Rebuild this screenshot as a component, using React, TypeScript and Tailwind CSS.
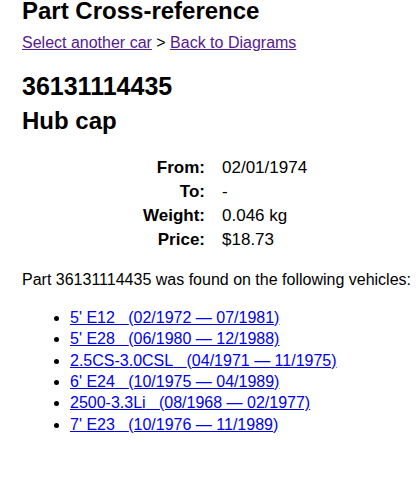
const specs = [
  { label: 'From:', value: '02/01/1974' },
  { label: 'To:', value: '-' },
  { label: 'Weight:', value: '0.046 kg' },
  { label: 'Price:', value: '$18.73' },
];

const vehicles = [
  { model: "5' E12", years: '(02/1972 — 07/1981)' },
  { model: "5' E28", years: '(06/1980 — 12/1988)' },
  { model: '2.5CS-3.0CSL', years: '(04/1971 — 11/1975)' },
  { model: "6' E24", years: '(10/1975 — 04/1989)' },
  { model: '2500-3.3Li', years: '(08/1968 — 02/1977)' },
  { model: "7' E23", years: '(10/1976 — 11/1989)' },
];

export default function App() {
  return (
    <div className="min-h-[500px] bg-white pl-[22px] pr-[2px] text-black font-['Liberation_Sans',Arial,sans-serif]">
      <h1 className="text-[24px] leading-[22px] font-bold">Part Cross-reference</h1>

      {/* breadcrumbs */}
      <div className="mt-[12px] text-[16px] leading-[18px]">
        <a href="#" className="text-[#551a8b] underline">Select another car</a>
        {' > '}
        <a href="#" className="text-[#551a8b] underline">Back to Diagrams</a>
      </div>

      <h2 className="mt-[20px] text-[25px] leading-[28px] font-bold">36131114435</h2>
      <h3 className="mt-[7px] text-[24px] leading-[28px] font-bold">Hub cap</h3>

      {/* part details */}
      <div className="mt-[21px] ml-[121px] grid grid-cols-[auto_auto] justify-start gap-x-[17px] text-[17px] leading-[24px]">
        {specs.map((s) => (
          <div key={s.label} className="contents">
            <div className="text-right font-bold">{s.label}</div>
            <div>{s.value}</div>
          </div>
        ))}
      </div>

      <p className="mt-[19px] whitespace-nowrap text-[16px] leading-[18px]">
        Part 36131114435 was found on the following vehicles:
      </p>

      <ul className="mt-[18px] list-disc pl-[48px] text-[16px] leading-[21.33px]">
        {vehicles.map((v) => (
          <li key={v.model}>
            <a href="#" className="text-[#0000ee] underline">
              {v.model}{'\u00a0\u00a0 '}{v.years}
            </a>
          </li>
        ))}
      </ul>
    </div>
  );
}
